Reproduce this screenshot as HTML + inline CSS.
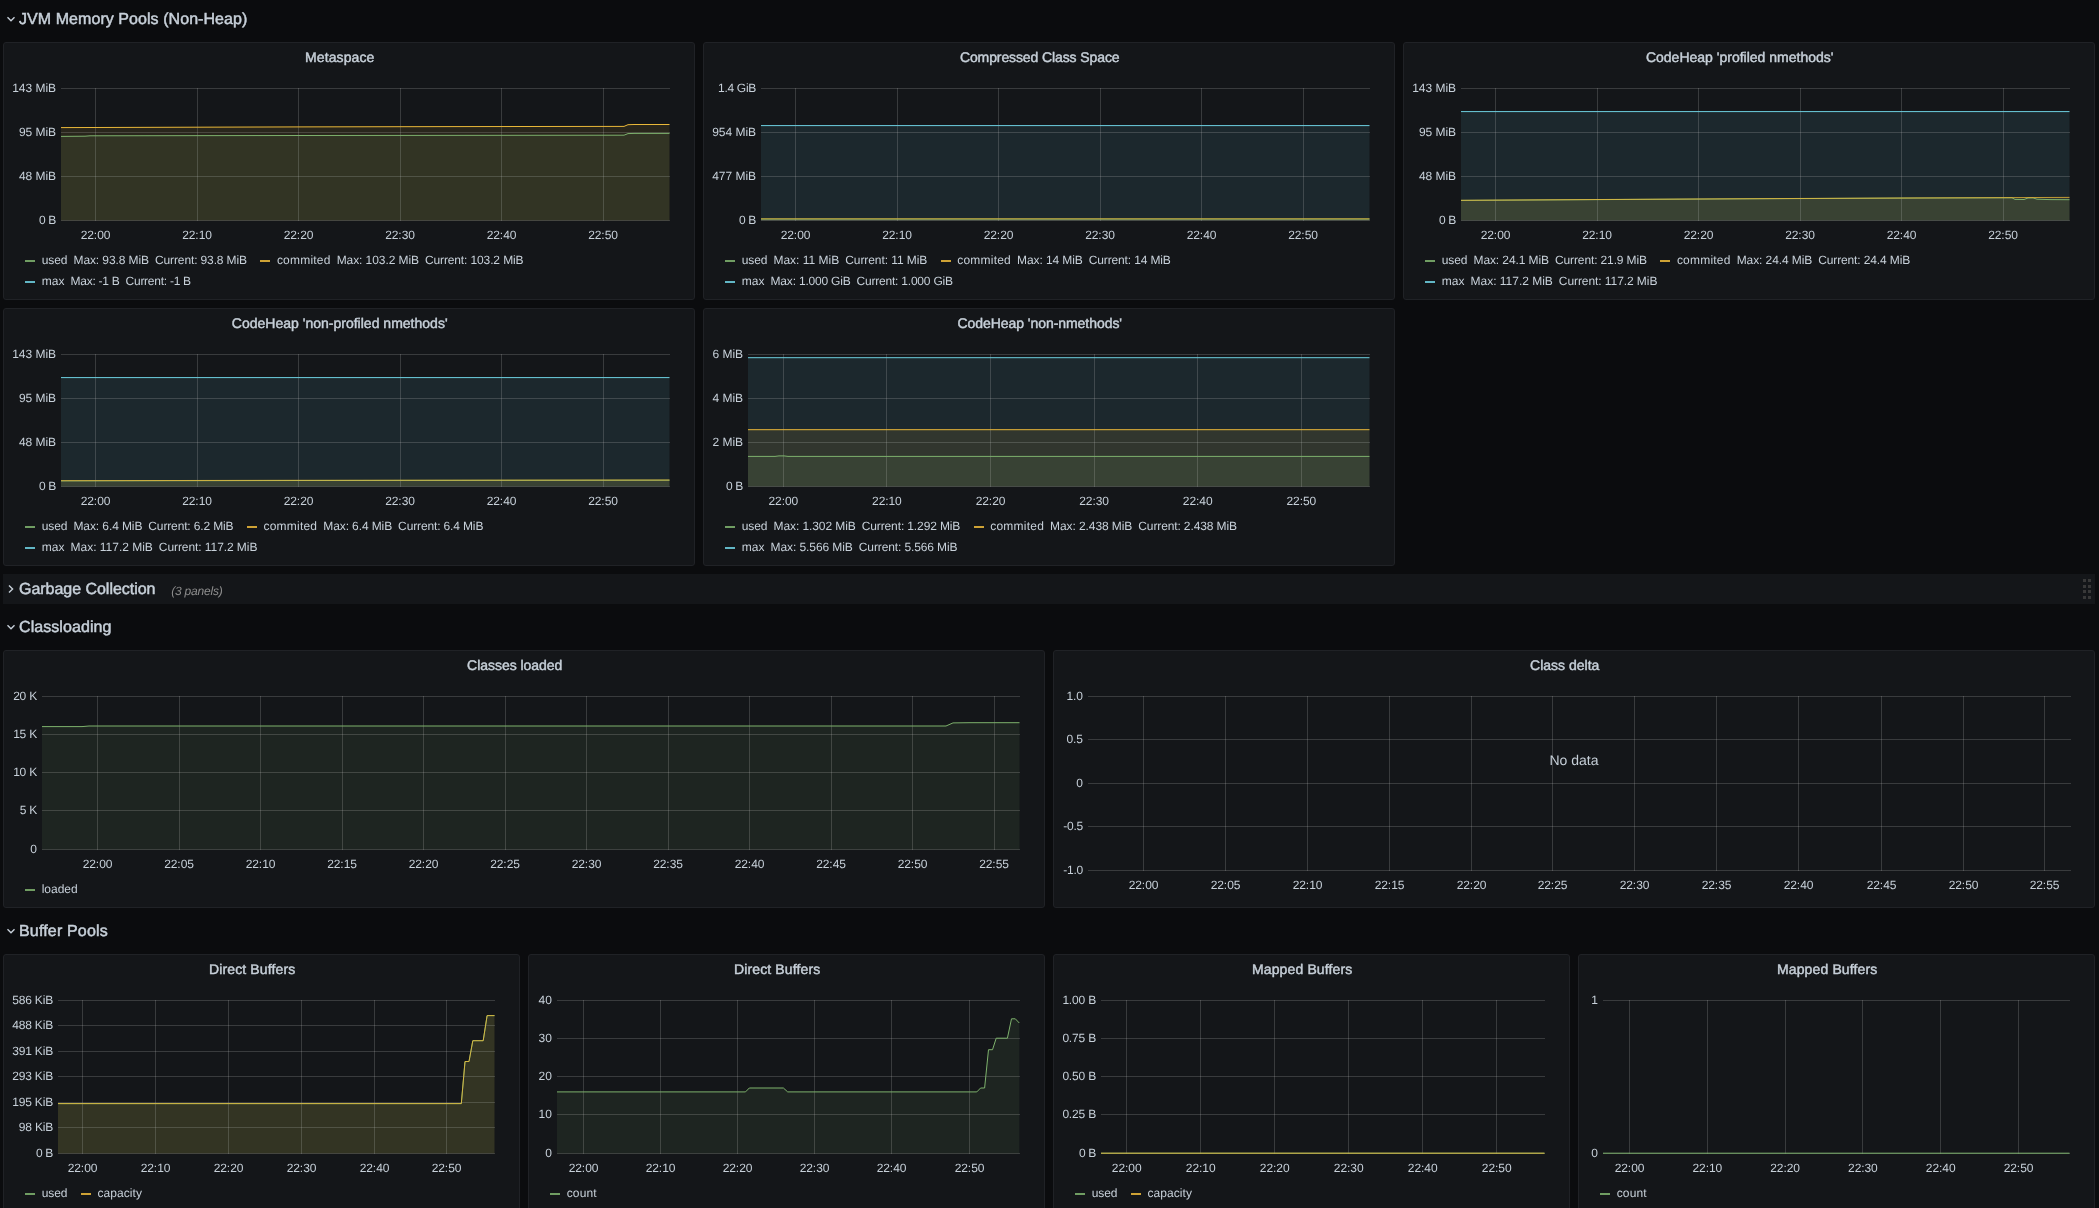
<!DOCTYPE html>
<html lang="en"><head><meta charset="utf-8"><title>JVM (Micrometer) - Grafana</title>
<style>
html,body{margin:0;padding:0}
body{width:2099px;height:1208px;overflow:hidden;background:#0b0c0e;color:#c7d0d9;font-family:"Liberation Sans",sans-serif;position:relative;text-rendering:geometricPrecision}
.t{position:absolute;white-space:pre;line-height:1em;font-size:12px}
.row{position:absolute;left:3px;width:2092px;height:30px}
.row.collapsed{background:#141619}
.row .t.rt{font-size:16px;-webkit-text-stroke:0.5px #c7d0d9}
.row .t.rx{font-style:italic;color:#8e8e8e}
.row svg{position:absolute;left:0;top:0}
.panel{position:absolute;box-sizing:border-box;background:#141619;border:1px solid #202226;border-radius:3px;overflow:hidden}
.panel>.in{position:absolute;left:-1px;top:-1px;will-change:transform}
.row>.in{position:absolute;left:0;top:0;width:100%;height:100%;will-change:transform}
.panel svg{position:absolute;left:0;top:0}
.t.pt{font-size:14px;-webkit-text-stroke:0.45px #c7d0d9}
.t.nd{font-size:14px}
.li{position:absolute;width:10px;height:2px;opacity:.87}
</style></head><body>

<div class="row" style="top:4px"><div class="in">
<svg width="30" height="30"><path d="M4.5 13.3 L8 16.7 L11.5 13.3" fill="none" stroke="#c7d0d9" stroke-width="1.4"/></svg>
<span class="t rt" style="left:16.00px;top:8px;letter-spacing:0.061px">JVM Memory Pools (Non-Heap)</span>
</div></div>
<div class="row collapsed" style="top:574px"><div class="in">
<svg width="2092" height="30"><path d="M6 11.6 L9.6 15.1 L6 18.6" fill="none" stroke="#c7d0d9" stroke-width="1.4"/>
<rect x="2080" y="5" width="3" height="3" fill="#383838"/>
<rect x="2080" y="11" width="3" height="3" fill="#383838"/>
<rect x="2080" y="16" width="3" height="3" fill="#383838"/>
<rect x="2080" y="22" width="3" height="3" fill="#383838"/>
<rect x="2085" y="5" width="3" height="3" fill="#383838"/>
<rect x="2085" y="11" width="3" height="3" fill="#383838"/>
<rect x="2085" y="16" width="3" height="3" fill="#383838"/>
<rect x="2085" y="22" width="3" height="3" fill="#383838"/>
</svg>
<span class="t rt" style="left:16.00px;top:8px;letter-spacing:-0.031px">Garbage Collection</span>
<span class="t rx" style="left:168.20px;top:11px;letter-spacing:-0.189px">(3 panels)</span>
</div></div>
<div class="row" style="top:612px"><div class="in">
<svg width="30" height="30"><path d="M4.5 13.3 L8 16.7 L11.5 13.3" fill="none" stroke="#c7d0d9" stroke-width="1.4"/></svg>
<span class="t rt" style="left:16.00px;top:8px;letter-spacing:0.072px">Classloading</span>
</div></div>
<div class="row" style="top:916px"><div class="in">
<svg width="30" height="30"><path d="M4.5 13.3 L8 16.7 L11.5 13.3" fill="none" stroke="#c7d0d9" stroke-width="1.4"/></svg>
<span class="t rt" style="left:16.00px;top:8px;letter-spacing:0.168px">Buffer Pools</span>
</div></div>
<div class="panel" style="left:3px;top:42px;width:692px;height:258px"><div class="in">
<svg width="692" height="258" viewBox="0 0 692 258"><path d="M58.0 85.6 L157.0 85.3 L297.0 84.9 L447.0 84.6 L621.0 84.4 L625.0 82.7 L631.0 82.5 L666.5 82.5 L666.5 178.5 L58.0 178.5 Z" fill="#eab839" fill-opacity="0.1" stroke="none"/><path d="M58.0 94.4 L82.0 94.2 L87.0 93.8 L297.0 93.5 L621.0 93.2 L625.0 91.6 L631.0 91.4 L666.5 91.4 L666.5 178.5 L58.0 178.5 Z" fill="#7eb26d" fill-opacity="0.1" stroke="none"/><rect x="92" y="46" width="1" height="133" fill="rgba(200,200,200,0.21)"/><rect x="194" y="46" width="1" height="133" fill="rgba(200,200,200,0.21)"/><rect x="295" y="46" width="1" height="133" fill="rgba(200,200,200,0.21)"/><rect x="397" y="46" width="1" height="133" fill="rgba(200,200,200,0.21)"/><rect x="498" y="46" width="1" height="133" fill="rgba(200,200,200,0.21)"/><rect x="600" y="46" width="1" height="133" fill="rgba(200,200,200,0.21)"/><rect x="58" y="46" width="609" height="1" fill="rgba(200,200,200,0.21)"/><rect x="58" y="90" width="609" height="1" fill="rgba(200,200,200,0.21)"/><rect x="58" y="134" width="609" height="1" fill="rgba(200,200,200,0.21)"/><rect x="58" y="178" width="609" height="1" fill="rgba(200,200,200,0.21)"/><path d="M58.0 85.6 L157.0 85.3 L297.0 84.9 L447.0 84.6 L621.0 84.4 L625.0 82.7 L631.0 82.5 L666.5 82.5" fill="none" stroke="#eab839" stroke-width="1" stroke-linejoin="round"/><path d="M58.0 94.4 L82.0 94.2 L87.0 93.8 L297.0 93.5 L621.0 93.2 L625.0 91.6 L631.0 91.4 L666.5 91.4" fill="none" stroke="#7eb26d" stroke-width="1" stroke-linejoin="round"/></svg>
<span class="t pt" style="left:302.00px;top:8px;letter-spacing:0.101px">Metaspace</span>
<span class="t " style="left:77.66px;top:187px;letter-spacing:-0.070px">22:00</span>
<span class="t " style="left:179.16px;top:187px;letter-spacing:-0.070px">22:10</span>
<span class="t " style="left:280.66px;top:187px;letter-spacing:-0.070px">22:20</span>
<span class="t " style="left:382.16px;top:187px;letter-spacing:-0.070px">22:30</span>
<span class="t " style="left:483.66px;top:187px;letter-spacing:-0.070px">22:40</span>
<span class="t " style="left:585.16px;top:187px;letter-spacing:-0.070px">22:50</span>
<span class="t " style="left:9.21px;top:40px;letter-spacing:-0.035px">143 MiB</span>
<span class="t " style="left:15.92px;top:84px;letter-spacing:-0.046px">95 MiB</span>
<span class="t " style="left:15.92px;top:128px;letter-spacing:-0.046px">48 MiB</span>
<span class="t " style="left:35.92px;top:172px;letter-spacing:-0.311px">0 B</span>
<i class="li" style="left:22.0px;top:218.0px;background:#7eb26d"></i>
<span class="t " style="left:38.70px;top:212px;letter-spacing:-0.065px">used</span>
<span class="t " style="left:70.47px;top:212px;letter-spacing:-0.088px">Max: 93.8 MiB</span>
<span class="t " style="left:152.03px;top:212px;letter-spacing:-0.129px">Current: 93.8 MiB</span>
<i class="li" style="left:257.2px;top:218.0px;background:#eab839"></i>
<span class="t " style="left:273.89px;top:212px;letter-spacing:0.220px">commited</span>
<span class="t " style="left:333.66px;top:212px;letter-spacing:-0.080px">Max: 103.2 MiB</span>
<span class="t " style="left:421.91px;top:212px;letter-spacing:-0.121px">Current: 103.2 MiB</span>
<i class="li" style="left:22.0px;top:239.0px;background:#6ed0e0"></i>
<span class="t " style="left:38.70px;top:233px;letter-spacing:0.061px">max</span>
<span class="t " style="left:67.55px;top:233px;letter-spacing:-0.261px">Max: -1 B</span>
<span class="t " style="left:122.57px;top:233px;letter-spacing:-0.261px">Current: -1 B</span>
</div></div>
<div class="panel" style="left:703px;top:42px;width:692px;height:258px"><div class="in">
<svg width="692" height="258" viewBox="0 0 692 258"><path d="M58.0 83.6 L666.5 83.6 L666.5 178.5 L58.0 178.5 Z" fill="#6ed0e0" fill-opacity="0.1" stroke="none"/><path d="M58.0 177.1 L666.5 177.1 L666.5 178.5 L58.0 178.5 Z" fill="#7eb26d" fill-opacity="0.1" stroke="none"/><path d="M58.0 176.8 L666.5 176.8 L666.5 178.5 L58.0 178.5 Z" fill="#eab839" fill-opacity="0.1" stroke="none"/><rect x="92" y="46" width="1" height="133" fill="rgba(200,200,200,0.21)"/><rect x="194" y="46" width="1" height="133" fill="rgba(200,200,200,0.21)"/><rect x="295" y="46" width="1" height="133" fill="rgba(200,200,200,0.21)"/><rect x="397" y="46" width="1" height="133" fill="rgba(200,200,200,0.21)"/><rect x="498" y="46" width="1" height="133" fill="rgba(200,200,200,0.21)"/><rect x="600" y="46" width="1" height="133" fill="rgba(200,200,200,0.21)"/><rect x="58" y="46" width="609" height="1" fill="rgba(200,200,200,0.21)"/><rect x="58" y="90" width="609" height="1" fill="rgba(200,200,200,0.21)"/><rect x="58" y="134" width="609" height="1" fill="rgba(200,200,200,0.21)"/><rect x="58" y="178" width="609" height="1" fill="rgba(200,200,200,0.21)"/><path d="M58.0 83.6 L666.5 83.6" fill="none" stroke="#6ed0e0" stroke-width="1" stroke-linejoin="round"/><path d="M58.0 177.1 L666.5 177.1" fill="none" stroke="#7eb26d" stroke-width="1" stroke-linejoin="round"/><path d="M58.0 176.8 L666.5 176.8" fill="none" stroke="#eab839" stroke-width="1" stroke-opacity="0.78" stroke-linejoin="round"/></svg>
<span class="t pt" style="left:256.90px;top:8px;letter-spacing:-0.103px">Compressed Class Space</span>
<span class="t " style="left:77.66px;top:187px;letter-spacing:-0.070px">22:00</span>
<span class="t " style="left:179.16px;top:187px;letter-spacing:-0.070px">22:10</span>
<span class="t " style="left:280.66px;top:187px;letter-spacing:-0.070px">22:20</span>
<span class="t " style="left:382.16px;top:187px;letter-spacing:-0.070px">22:30</span>
<span class="t " style="left:483.66px;top:187px;letter-spacing:-0.070px">22:40</span>
<span class="t " style="left:585.16px;top:187px;letter-spacing:-0.070px">22:50</span>
<span class="t " style="left:15.06px;top:40px;letter-spacing:-0.299px">1.4 GiB</span>
<span class="t " style="left:9.21px;top:84px;letter-spacing:-0.035px">954 MiB</span>
<span class="t " style="left:9.21px;top:128px;letter-spacing:-0.035px">477 MiB</span>
<span class="t " style="left:35.92px;top:172px;letter-spacing:-0.311px">0 B</span>
<i class="li" style="left:22.0px;top:218.0px;background:#7eb26d"></i>
<span class="t " style="left:38.70px;top:212px;letter-spacing:-0.065px">used</span>
<span class="t " style="left:70.47px;top:212px;letter-spacing:-0.007px">Max: 11 MiB</span>
<span class="t " style="left:142.20px;top:212px;letter-spacing:-0.075px">Current: 11 MiB</span>
<i class="li" style="left:237.5px;top:218.0px;background:#eab839"></i>
<span class="t " style="left:254.21px;top:212px;letter-spacing:0.220px">commited</span>
<span class="t " style="left:313.99px;top:212px;letter-spacing:-0.088px">Max: 14 MiB</span>
<span class="t " style="left:385.71px;top:212px;letter-spacing:-0.134px">Current: 14 MiB</span>
<i class="li" style="left:22.0px;top:239.0px;background:#6ed0e0"></i>
<span class="t " style="left:38.70px;top:233px;letter-spacing:0.061px">max</span>
<span class="t " style="left:67.55px;top:233px;letter-spacing:-0.197px">Max: 1.000 GiB</span>
<span class="t " style="left:153.52px;top:233px;letter-spacing:-0.211px">Current: 1.000 GiB</span>
</div></div>
<div class="panel" style="left:1403px;top:42px;width:692px;height:258px"><div class="in">
<svg width="692" height="258" viewBox="0 0 692 258"><path d="M58.0 69.6 L666.5 69.6 L666.5 178.5 L58.0 178.5 Z" fill="#6ed0e0" fill-opacity="0.1" stroke="none"/><path d="M58.0 158.4 L197.0 157.6 L347.0 156.8 L497.0 156.1 L609.0 155.8 L612.0 157.4 L621.0 157.5 L625.0 156.0 L630.0 155.9 L634.0 157.2 L647.0 157.6 L666.5 157.7 L666.5 178.5 L58.0 178.5 Z" fill="#7eb26d" fill-opacity="0.1" stroke="none"/><path d="M58.0 158.3 L197.0 157.5 L347.0 156.7 L497.0 156.0 L609.0 155.6 L666.5 155.4 L666.5 178.5 L58.0 178.5 Z" fill="#eab839" fill-opacity="0.1" stroke="none"/><rect x="92" y="46" width="1" height="133" fill="rgba(200,200,200,0.21)"/><rect x="194" y="46" width="1" height="133" fill="rgba(200,200,200,0.21)"/><rect x="295" y="46" width="1" height="133" fill="rgba(200,200,200,0.21)"/><rect x="397" y="46" width="1" height="133" fill="rgba(200,200,200,0.21)"/><rect x="498" y="46" width="1" height="133" fill="rgba(200,200,200,0.21)"/><rect x="600" y="46" width="1" height="133" fill="rgba(200,200,200,0.21)"/><rect x="58" y="46" width="609" height="1" fill="rgba(200,200,200,0.21)"/><rect x="58" y="90" width="609" height="1" fill="rgba(200,200,200,0.21)"/><rect x="58" y="134" width="609" height="1" fill="rgba(200,200,200,0.21)"/><rect x="58" y="178" width="609" height="1" fill="rgba(200,200,200,0.21)"/><path d="M58.0 69.6 L666.5 69.6" fill="none" stroke="#6ed0e0" stroke-width="1" stroke-linejoin="round"/><path d="M58.0 158.4 L197.0 157.6 L347.0 156.8 L497.0 156.1 L609.0 155.8 L612.0 157.4 L621.0 157.5 L625.0 156.0 L630.0 155.9 L634.0 157.2 L647.0 157.6 L666.5 157.7" fill="none" stroke="#7eb26d" stroke-width="1" stroke-linejoin="round"/><path d="M58.0 158.3 L197.0 157.5 L347.0 156.7 L497.0 156.0 L609.0 155.6 L666.5 155.4" fill="none" stroke="#eab839" stroke-width="1" stroke-opacity="0.78" stroke-linejoin="round"/></svg>
<span class="t pt" style="left:242.93px;top:8px;letter-spacing:0.002px">CodeHeap &#x27;profiled nmethods&#x27;</span>
<span class="t " style="left:77.66px;top:187px;letter-spacing:-0.070px">22:00</span>
<span class="t " style="left:179.16px;top:187px;letter-spacing:-0.070px">22:10</span>
<span class="t " style="left:280.66px;top:187px;letter-spacing:-0.070px">22:20</span>
<span class="t " style="left:382.16px;top:187px;letter-spacing:-0.070px">22:30</span>
<span class="t " style="left:483.66px;top:187px;letter-spacing:-0.070px">22:40</span>
<span class="t " style="left:585.16px;top:187px;letter-spacing:-0.070px">22:50</span>
<span class="t " style="left:9.21px;top:40px;letter-spacing:-0.035px">143 MiB</span>
<span class="t " style="left:15.92px;top:84px;letter-spacing:-0.046px">95 MiB</span>
<span class="t " style="left:15.92px;top:128px;letter-spacing:-0.046px">48 MiB</span>
<span class="t " style="left:35.92px;top:172px;letter-spacing:-0.311px">0 B</span>
<i class="li" style="left:22.0px;top:218.0px;background:#7eb26d"></i>
<span class="t " style="left:38.70px;top:212px;letter-spacing:-0.065px">used</span>
<span class="t " style="left:70.47px;top:212px;letter-spacing:-0.088px">Max: 24.1 MiB</span>
<span class="t " style="left:152.03px;top:212px;letter-spacing:-0.129px">Current: 21.9 MiB</span>
<i class="li" style="left:257.2px;top:218.0px;background:#eab839"></i>
<span class="t " style="left:273.89px;top:212px;letter-spacing:0.220px">commited</span>
<span class="t " style="left:333.66px;top:212px;letter-spacing:-0.088px">Max: 24.4 MiB</span>
<span class="t " style="left:415.22px;top:212px;letter-spacing:-0.129px">Current: 24.4 MiB</span>
<i class="li" style="left:22.0px;top:239.0px;background:#6ed0e0"></i>
<span class="t " style="left:38.70px;top:233px;letter-spacing:0.061px">max</span>
<span class="t " style="left:67.55px;top:233px;letter-spacing:-0.017px">Max: 117.2 MiB</span>
<span class="t " style="left:155.80px;top:233px;letter-spacing:-0.072px">Current: 117.2 MiB</span>
</div></div>
<div class="panel" style="left:3px;top:308px;width:692px;height:258px"><div class="in">
<svg width="692" height="258" viewBox="0 0 692 258"><path d="M58.0 69.6 L666.5 69.6 L666.5 178.5 L58.0 178.5 Z" fill="#6ed0e0" fill-opacity="0.1" stroke="none"/><path d="M58.0 172.9 L297.0 172.5 L666.5 172.2 L666.5 178.5 L58.0 178.5 Z" fill="#7eb26d" fill-opacity="0.1" stroke="none"/><path d="M58.0 172.7 L297.0 172.3 L666.5 172.0 L666.5 178.5 L58.0 178.5 Z" fill="#eab839" fill-opacity="0.1" stroke="none"/><rect x="92" y="46" width="1" height="133" fill="rgba(200,200,200,0.21)"/><rect x="194" y="46" width="1" height="133" fill="rgba(200,200,200,0.21)"/><rect x="295" y="46" width="1" height="133" fill="rgba(200,200,200,0.21)"/><rect x="397" y="46" width="1" height="133" fill="rgba(200,200,200,0.21)"/><rect x="498" y="46" width="1" height="133" fill="rgba(200,200,200,0.21)"/><rect x="600" y="46" width="1" height="133" fill="rgba(200,200,200,0.21)"/><rect x="58" y="46" width="609" height="1" fill="rgba(200,200,200,0.21)"/><rect x="58" y="90" width="609" height="1" fill="rgba(200,200,200,0.21)"/><rect x="58" y="134" width="609" height="1" fill="rgba(200,200,200,0.21)"/><rect x="58" y="178" width="609" height="1" fill="rgba(200,200,200,0.21)"/><path d="M58.0 69.6 L666.5 69.6" fill="none" stroke="#6ed0e0" stroke-width="1" stroke-linejoin="round"/><path d="M58.0 172.9 L297.0 172.5 L666.5 172.2" fill="none" stroke="#7eb26d" stroke-width="1" stroke-linejoin="round"/><path d="M58.0 172.7 L297.0 172.3 L666.5 172.0" fill="none" stroke="#eab839" stroke-width="1" stroke-opacity="0.78" stroke-linejoin="round"/></svg>
<span class="t pt" style="left:228.79px;top:8px;letter-spacing:0.010px">CodeHeap &#x27;non-profiled nmethods&#x27;</span>
<span class="t " style="left:77.66px;top:187px;letter-spacing:-0.070px">22:00</span>
<span class="t " style="left:179.16px;top:187px;letter-spacing:-0.070px">22:10</span>
<span class="t " style="left:280.66px;top:187px;letter-spacing:-0.070px">22:20</span>
<span class="t " style="left:382.16px;top:187px;letter-spacing:-0.070px">22:30</span>
<span class="t " style="left:483.66px;top:187px;letter-spacing:-0.070px">22:40</span>
<span class="t " style="left:585.16px;top:187px;letter-spacing:-0.070px">22:50</span>
<span class="t " style="left:9.21px;top:40px;letter-spacing:-0.035px">143 MiB</span>
<span class="t " style="left:15.92px;top:84px;letter-spacing:-0.046px">95 MiB</span>
<span class="t " style="left:15.92px;top:128px;letter-spacing:-0.046px">48 MiB</span>
<span class="t " style="left:35.92px;top:172px;letter-spacing:-0.311px">0 B</span>
<i class="li" style="left:22.0px;top:218.0px;background:#7eb26d"></i>
<span class="t " style="left:38.70px;top:212px;letter-spacing:-0.065px">used</span>
<span class="t " style="left:70.47px;top:212px;letter-spacing:-0.098px">Max: 6.4 MiB</span>
<span class="t " style="left:145.33px;top:212px;letter-spacing:-0.139px">Current: 6.2 MiB</span>
<i class="li" style="left:243.8px;top:218.0px;background:#eab839"></i>
<span class="t " style="left:260.48px;top:212px;letter-spacing:0.220px">commited</span>
<span class="t " style="left:320.26px;top:212px;letter-spacing:-0.098px">Max: 6.4 MiB</span>
<span class="t " style="left:395.12px;top:212px;letter-spacing:-0.139px">Current: 6.4 MiB</span>
<i class="li" style="left:22.0px;top:239.0px;background:#6ed0e0"></i>
<span class="t " style="left:38.70px;top:233px;letter-spacing:0.061px">max</span>
<span class="t " style="left:67.55px;top:233px;letter-spacing:-0.017px">Max: 117.2 MiB</span>
<span class="t " style="left:155.80px;top:233px;letter-spacing:-0.072px">Current: 117.2 MiB</span>
</div></div>
<div class="panel" style="left:703px;top:308px;width:692px;height:258px"><div class="in">
<svg width="692" height="258" viewBox="0 0 692 258"><path d="M45.0 49.7 L666.5 49.7 L666.5 178.5 L45.0 178.5 Z" fill="#6ed0e0" fill-opacity="0.1" stroke="none"/><path d="M45.0 121.7 L666.5 121.7 L666.5 178.5 L45.0 178.5 Z" fill="#eab839" fill-opacity="0.1" stroke="none"/><path d="M45.0 148.4 L72.0 148.4 L76.0 147.9 L81.0 147.9 L85.0 148.4 L666.5 148.4 L666.5 178.5 L45.0 178.5 Z" fill="#7eb26d" fill-opacity="0.1" stroke="none"/><rect x="80" y="46" width="1" height="133" fill="rgba(200,200,200,0.21)"/><rect x="183" y="46" width="1" height="133" fill="rgba(200,200,200,0.21)"/><rect x="287" y="46" width="1" height="133" fill="rgba(200,200,200,0.21)"/><rect x="391" y="46" width="1" height="133" fill="rgba(200,200,200,0.21)"/><rect x="494" y="46" width="1" height="133" fill="rgba(200,200,200,0.21)"/><rect x="598" y="46" width="1" height="133" fill="rgba(200,200,200,0.21)"/><rect x="45" y="46" width="622" height="1" fill="rgba(200,200,200,0.21)"/><rect x="45" y="90" width="622" height="1" fill="rgba(200,200,200,0.21)"/><rect x="45" y="134" width="622" height="1" fill="rgba(200,200,200,0.21)"/><rect x="45" y="178" width="622" height="1" fill="rgba(200,200,200,0.21)"/><path d="M45.0 49.7 L666.5 49.7" fill="none" stroke="#6ed0e0" stroke-width="1" stroke-linejoin="round"/><path d="M45.0 121.7 L666.5 121.7" fill="none" stroke="#eab839" stroke-width="1" stroke-linejoin="round"/><path d="M45.0 148.4 L72.0 148.4 L76.0 147.9 L81.0 147.9 L85.0 148.4 L666.5 148.4" fill="none" stroke="#7eb26d" stroke-width="1" stroke-linejoin="round"/></svg>
<span class="t pt" style="left:254.40px;top:8px;letter-spacing:-0.047px">CodeHeap &#x27;non-nmethods&#x27;</span>
<span class="t " style="left:65.46px;top:187px;letter-spacing:-0.070px">22:00</span>
<span class="t " style="left:169.06px;top:187px;letter-spacing:-0.070px">22:10</span>
<span class="t " style="left:272.66px;top:187px;letter-spacing:-0.070px">22:20</span>
<span class="t " style="left:376.26px;top:187px;letter-spacing:-0.070px">22:30</span>
<span class="t " style="left:479.86px;top:187px;letter-spacing:-0.070px">22:40</span>
<span class="t " style="left:583.46px;top:187px;letter-spacing:-0.070px">22:50</span>
<span class="t " style="left:9.62px;top:40px;letter-spacing:-0.062px">6 MiB</span>
<span class="t " style="left:9.62px;top:84px;letter-spacing:-0.062px">4 MiB</span>
<span class="t " style="left:9.62px;top:128px;letter-spacing:-0.062px">2 MiB</span>
<span class="t " style="left:22.92px;top:172px;letter-spacing:-0.311px">0 B</span>
<i class="li" style="left:22.0px;top:218.0px;background:#7eb26d"></i>
<span class="t " style="left:38.70px;top:212px;letter-spacing:-0.065px">used</span>
<span class="t " style="left:70.47px;top:212px;letter-spacing:-0.080px">Max: 1.302 MiB</span>
<span class="t " style="left:158.72px;top:212px;letter-spacing:-0.121px">Current: 1.292 MiB</span>
<i class="li" style="left:270.6px;top:218.0px;background:#eab839"></i>
<span class="t " style="left:287.26px;top:212px;letter-spacing:0.220px">commited</span>
<span class="t " style="left:347.04px;top:212px;letter-spacing:-0.080px">Max: 2.438 MiB</span>
<span class="t " style="left:435.29px;top:212px;letter-spacing:-0.121px">Current: 2.438 MiB</span>
<i class="li" style="left:22.0px;top:239.0px;background:#6ed0e0"></i>
<span class="t " style="left:38.70px;top:233px;letter-spacing:0.061px">max</span>
<span class="t " style="left:67.55px;top:233px;letter-spacing:-0.080px">Max: 5.566 MiB</span>
<span class="t " style="left:155.80px;top:233px;letter-spacing:-0.121px">Current: 5.566 MiB</span>
</div></div>
<div class="panel" style="left:3px;top:650px;width:1042px;height:258px"><div class="in">
<svg width="1042" height="258" viewBox="0 0 1042 258"><path d="M39.0 76.6 L79.0 76.6 L86.0 76.0 L943.0 76.0 L950.0 72.9 L967.0 72.7 L1016.5 72.7 L1016.5 199.5 L39.0 199.5 Z" fill="#7eb26d" fill-opacity="0.1" stroke="none"/><rect x="94" y="46" width="1" height="154" fill="rgba(200,200,200,0.21)"/><rect x="176" y="46" width="1" height="154" fill="rgba(200,200,200,0.21)"/><rect x="257" y="46" width="1" height="154" fill="rgba(200,200,200,0.21)"/><rect x="339" y="46" width="1" height="154" fill="rgba(200,200,200,0.21)"/><rect x="420" y="46" width="1" height="154" fill="rgba(200,200,200,0.21)"/><rect x="502" y="46" width="1" height="154" fill="rgba(200,200,200,0.21)"/><rect x="583" y="46" width="1" height="154" fill="rgba(200,200,200,0.21)"/><rect x="665" y="46" width="1" height="154" fill="rgba(200,200,200,0.21)"/><rect x="746" y="46" width="1" height="154" fill="rgba(200,200,200,0.21)"/><rect x="828" y="46" width="1" height="154" fill="rgba(200,200,200,0.21)"/><rect x="909" y="46" width="1" height="154" fill="rgba(200,200,200,0.21)"/><rect x="991" y="46" width="1" height="154" fill="rgba(200,200,200,0.21)"/><rect x="39" y="46" width="978" height="1" fill="rgba(200,200,200,0.21)"/><rect x="39" y="84" width="978" height="1" fill="rgba(200,200,200,0.21)"/><rect x="39" y="122" width="978" height="1" fill="rgba(200,200,200,0.21)"/><rect x="39" y="160" width="978" height="1" fill="rgba(200,200,200,0.21)"/><rect x="39" y="199" width="978" height="1" fill="rgba(200,200,200,0.21)"/><path d="M39.0 76.6 L79.0 76.6 L86.0 76.0 L943.0 76.0 L950.0 72.9 L967.0 72.7 L1016.5 72.7" fill="none" stroke="#7eb26d" stroke-width="1" stroke-linejoin="round"/></svg>
<span class="t pt" style="left:464.11px;top:8px;letter-spacing:-0.039px">Classes loaded</span>
<span class="t " style="left:79.66px;top:208px;letter-spacing:-0.070px">22:00</span>
<span class="t " style="left:161.16px;top:208px;letter-spacing:-0.070px">22:05</span>
<span class="t " style="left:242.66px;top:208px;letter-spacing:-0.070px">22:10</span>
<span class="t " style="left:324.16px;top:208px;letter-spacing:-0.070px">22:15</span>
<span class="t " style="left:405.66px;top:208px;letter-spacing:-0.070px">22:20</span>
<span class="t " style="left:487.16px;top:208px;letter-spacing:-0.070px">22:25</span>
<span class="t " style="left:568.66px;top:208px;letter-spacing:-0.070px">22:30</span>
<span class="t " style="left:650.16px;top:208px;letter-spacing:-0.070px">22:35</span>
<span class="t " style="left:731.66px;top:208px;letter-spacing:-0.070px">22:40</span>
<span class="t " style="left:813.16px;top:208px;letter-spacing:-0.070px">22:45</span>
<span class="t " style="left:894.66px;top:208px;letter-spacing:-0.070px">22:50</span>
<span class="t " style="left:976.16px;top:208px;letter-spacing:-0.070px">22:55</span>
<span class="t " style="left:10.17px;top:40px;letter-spacing:-0.214px">20 K</span>
<span class="t " style="left:10.17px;top:78px;letter-spacing:-0.214px">15 K</span>
<span class="t " style="left:10.17px;top:116px;letter-spacing:-0.214px">10 K</span>
<span class="t " style="left:16.87px;top:154px;letter-spacing:-0.295px">5 K</span>
<span class="t " style="left:27.30px;top:193px;letter-spacing:0.015px">0</span>
<i class="li" style="left:22.0px;top:239.0px;background:#7eb26d"></i>
<span class="t " style="left:38.70px;top:233px;letter-spacing:-0.019px">loaded</span>
</div></div>
<div class="panel" style="left:1053px;top:650px;width:1042px;height:258px"><div class="in">
<svg width="1042" height="258" viewBox="0 0 1042 258"><rect x="90" y="46" width="1" height="175" fill="rgba(200,200,200,0.21)"/><rect x="172" y="46" width="1" height="175" fill="rgba(200,200,200,0.21)"/><rect x="254" y="46" width="1" height="175" fill="rgba(200,200,200,0.21)"/><rect x="336" y="46" width="1" height="175" fill="rgba(200,200,200,0.21)"/><rect x="418" y="46" width="1" height="175" fill="rgba(200,200,200,0.21)"/><rect x="499" y="46" width="1" height="175" fill="rgba(200,200,200,0.21)"/><rect x="581" y="46" width="1" height="175" fill="rgba(200,200,200,0.21)"/><rect x="663" y="46" width="1" height="175" fill="rgba(200,200,200,0.21)"/><rect x="745" y="46" width="1" height="175" fill="rgba(200,200,200,0.21)"/><rect x="828" y="46" width="1" height="175" fill="rgba(200,200,200,0.21)"/><rect x="910" y="46" width="1" height="175" fill="rgba(200,200,200,0.21)"/><rect x="991" y="46" width="1" height="175" fill="rgba(200,200,200,0.21)"/><rect x="35" y="46" width="983" height="1" fill="rgba(200,200,200,0.21)"/><rect x="35" y="89" width="983" height="1" fill="rgba(200,200,200,0.21)"/><rect x="35" y="133" width="983" height="1" fill="rgba(200,200,200,0.21)"/><rect x="35" y="176" width="983" height="1" fill="rgba(200,200,200,0.21)"/><rect x="35" y="220" width="983" height="1" fill="rgba(200,200,200,0.21)"/></svg>
<span class="t pt" style="left:477.04px;top:8px;letter-spacing:0.004px">Class delta</span>
<span class="t " style="left:75.66px;top:229px;letter-spacing:-0.070px">22:00</span>
<span class="t " style="left:157.66px;top:229px;letter-spacing:-0.070px">22:05</span>
<span class="t " style="left:239.66px;top:229px;letter-spacing:-0.070px">22:10</span>
<span class="t " style="left:321.66px;top:229px;letter-spacing:-0.070px">22:15</span>
<span class="t " style="left:403.66px;top:229px;letter-spacing:-0.070px">22:20</span>
<span class="t " style="left:484.66px;top:229px;letter-spacing:-0.070px">22:25</span>
<span class="t " style="left:566.66px;top:229px;letter-spacing:-0.070px">22:30</span>
<span class="t " style="left:648.66px;top:229px;letter-spacing:-0.070px">22:35</span>
<span class="t " style="left:730.66px;top:229px;letter-spacing:-0.070px">22:40</span>
<span class="t " style="left:813.66px;top:229px;letter-spacing:-0.070px">22:45</span>
<span class="t " style="left:895.66px;top:229px;letter-spacing:-0.070px">22:50</span>
<span class="t " style="left:976.66px;top:229px;letter-spacing:-0.070px">22:55</span>
<span class="t " style="left:13.46px;top:40px;letter-spacing:-0.049px">1.0</span>
<span class="t " style="left:13.46px;top:83px;letter-spacing:-0.049px">0.5</span>
<span class="t " style="left:23.30px;top:127px;letter-spacing:0.015px">0</span>
<span class="t " style="left:10.17px;top:170px;letter-spacing:-0.215px">-0.5</span>
<span class="t " style="left:10.17px;top:214px;letter-spacing:-0.215px">-1.0</span>
<span class="t nd" style="left:496.42px;top:103px;letter-spacing:0.016px">No data</span>
</div></div>
<div class="panel" style="left:3px;top:954px;width:517px;height:258px"><div class="in">
<svg width="517" height="258" viewBox="0 0 517 258"><path d="M55.0 149.6 L458.3 149.6 L462.0 107.5 L466.0 107.5 L469.8 86.7 L480.2 86.7 L484.1 61.6 L491.5 61.6 L491.5 199.5 L55.0 199.5 Z" fill="#7eb26d" fill-opacity="0.1" stroke="none"/><path d="M55.0 149.6 L458.3 149.6 L462.0 107.5 L466.0 107.5 L469.8 86.7 L480.2 86.7 L484.1 61.6 L491.5 61.6 L491.5 199.5 L55.0 199.5 Z" fill="#eab839" fill-opacity="0.1" stroke="none"/><rect x="79" y="46" width="1" height="154" fill="rgba(200,200,200,0.21)"/><rect x="152" y="46" width="1" height="154" fill="rgba(200,200,200,0.21)"/><rect x="225" y="46" width="1" height="154" fill="rgba(200,200,200,0.21)"/><rect x="298" y="46" width="1" height="154" fill="rgba(200,200,200,0.21)"/><rect x="371" y="46" width="1" height="154" fill="rgba(200,200,200,0.21)"/><rect x="443" y="46" width="1" height="154" fill="rgba(200,200,200,0.21)"/><rect x="55" y="46" width="437" height="1" fill="rgba(200,200,200,0.21)"/><rect x="55" y="71" width="437" height="1" fill="rgba(200,200,200,0.21)"/><rect x="55" y="97" width="437" height="1" fill="rgba(200,200,200,0.21)"/><rect x="55" y="122" width="437" height="1" fill="rgba(200,200,200,0.21)"/><rect x="55" y="148" width="437" height="1" fill="rgba(200,200,200,0.21)"/><rect x="55" y="173" width="437" height="1" fill="rgba(200,200,200,0.21)"/><rect x="55" y="199" width="437" height="1" fill="rgba(200,200,200,0.21)"/><path d="M55.0 149.6 L458.3 149.6 L462.0 107.5 L466.0 107.5 L469.8 86.7 L480.2 86.7 L484.1 61.6 L491.5 61.6" fill="none" stroke="#7eb26d" stroke-width="1" stroke-linejoin="round"/><path d="M55.0 149.6 L458.3 149.6 L462.0 107.5 L466.0 107.5 L469.8 86.7 L480.2 86.7 L484.1 61.6 L491.5 61.6" fill="none" stroke="#eab839" stroke-width="1" stroke-opacity="0.78" stroke-linejoin="round"/></svg>
<span class="t pt" style="left:205.96px;top:8px;letter-spacing:0.138px">Direct Buffers</span>
<span class="t " style="left:64.66px;top:208px;letter-spacing:-0.070px">22:00</span>
<span class="t " style="left:137.66px;top:208px;letter-spacing:-0.070px">22:10</span>
<span class="t " style="left:210.66px;top:208px;letter-spacing:-0.070px">22:20</span>
<span class="t " style="left:283.66px;top:208px;letter-spacing:-0.070px">22:30</span>
<span class="t " style="left:356.66px;top:208px;letter-spacing:-0.070px">22:40</span>
<span class="t " style="left:428.66px;top:208px;letter-spacing:-0.070px">22:50</span>
<span class="t " style="left:9.15px;top:40px;letter-spacing:-0.168px">586 KiB</span>
<span class="t " style="left:9.15px;top:65px;letter-spacing:-0.168px">488 KiB</span>
<span class="t " style="left:9.15px;top:91px;letter-spacing:-0.168px">391 KiB</span>
<span class="t " style="left:9.15px;top:116px;letter-spacing:-0.168px">293 KiB</span>
<span class="t " style="left:9.15px;top:142px;letter-spacing:-0.168px">195 KiB</span>
<span class="t " style="left:15.85px;top:167px;letter-spacing:-0.202px">98 KiB</span>
<span class="t " style="left:32.92px;top:193px;letter-spacing:-0.311px">0 B</span>
<i class="li" style="left:22.0px;top:239.0px;background:#7eb26d"></i>
<span class="t " style="left:38.70px;top:233px;letter-spacing:-0.065px">used</span>
<i class="li" style="left:77.8px;top:239.0px;background:#eab839"></i>
<span class="t " style="left:94.47px;top:233px;letter-spacing:0.068px">capacity</span>
</div></div>
<div class="panel" style="left:528px;top:954px;width:517px;height:258px"><div class="in">
<svg width="517" height="258" viewBox="0 0 517 258"><path d="M29.0 137.9 L217.5 137.9 L221.3 134.0 L255.4 134.0 L259.7 137.9 L448.8 137.9 L452.6 134.0 L456.6 134.0 L460.5 95.7 L464.5 95.7 L468.2 84.2 L479.4 84.2 L483.5 64.8 L487.3 64.8 L491.3 69.0 L491.3 199.5 L29.0 199.5 Z" fill="#7eb26d" fill-opacity="0.1" stroke="none"/><rect x="55" y="46" width="1" height="154" fill="rgba(200,200,200,0.21)"/><rect x="132" y="46" width="1" height="154" fill="rgba(200,200,200,0.21)"/><rect x="209" y="46" width="1" height="154" fill="rgba(200,200,200,0.21)"/><rect x="286" y="46" width="1" height="154" fill="rgba(200,200,200,0.21)"/><rect x="363" y="46" width="1" height="154" fill="rgba(200,200,200,0.21)"/><rect x="441" y="46" width="1" height="154" fill="rgba(200,200,200,0.21)"/><rect x="29" y="46" width="463" height="1" fill="rgba(200,200,200,0.21)"/><rect x="29" y="84" width="463" height="1" fill="rgba(200,200,200,0.21)"/><rect x="29" y="122" width="463" height="1" fill="rgba(200,200,200,0.21)"/><rect x="29" y="160" width="463" height="1" fill="rgba(200,200,200,0.21)"/><rect x="29" y="199" width="463" height="1" fill="rgba(200,200,200,0.21)"/><path d="M29.0 137.9 L217.5 137.9 L221.3 134.0 L255.4 134.0 L259.7 137.9 L448.8 137.9 L452.6 134.0 L456.6 134.0 L460.5 95.7 L464.5 95.7 L468.2 84.2 L479.4 84.2 L483.5 64.8 L487.3 64.8 L491.3 69.0" fill="none" stroke="#7eb26d" stroke-width="1" stroke-linejoin="round"/></svg>
<span class="t pt" style="left:205.96px;top:8px;letter-spacing:0.138px">Direct Buffers</span>
<span class="t " style="left:40.66px;top:208px;letter-spacing:-0.070px">22:00</span>
<span class="t " style="left:117.66px;top:208px;letter-spacing:-0.070px">22:10</span>
<span class="t " style="left:194.66px;top:208px;letter-spacing:-0.070px">22:20</span>
<span class="t " style="left:271.66px;top:208px;letter-spacing:-0.070px">22:30</span>
<span class="t " style="left:348.66px;top:208px;letter-spacing:-0.070px">22:40</span>
<span class="t " style="left:426.66px;top:208px;letter-spacing:-0.070px">22:50</span>
<span class="t " style="left:10.59px;top:40px;letter-spacing:0.023px">40</span>
<span class="t " style="left:10.59px;top:78px;letter-spacing:0.023px">30</span>
<span class="t " style="left:10.59px;top:116px;letter-spacing:0.023px">20</span>
<span class="t " style="left:10.59px;top:154px;letter-spacing:0.023px">10</span>
<span class="t " style="left:17.30px;top:193px;letter-spacing:0.015px">0</span>
<i class="li" style="left:22.0px;top:239.0px;background:#7eb26d"></i>
<span class="t " style="left:38.70px;top:233px;letter-spacing:0.145px">count</span>
</div></div>
<div class="panel" style="left:1053px;top:954px;width:517px;height:258px"><div class="in">
<svg width="517" height="258" viewBox="0 0 517 258"><path d="M48.0 199.2 L491.5 199.2 L491.5 199.5 L48.0 199.5 Z" fill="#7eb26d" fill-opacity="0.1" stroke="none"/><path d="M48.0 199.2 L491.5 199.2 L491.5 199.5 L48.0 199.5 Z" fill="#eab839" fill-opacity="0.1" stroke="none"/><rect x="73" y="46" width="1" height="154" fill="rgba(200,200,200,0.21)"/><rect x="147" y="46" width="1" height="154" fill="rgba(200,200,200,0.21)"/><rect x="221" y="46" width="1" height="154" fill="rgba(200,200,200,0.21)"/><rect x="295" y="46" width="1" height="154" fill="rgba(200,200,200,0.21)"/><rect x="369" y="46" width="1" height="154" fill="rgba(200,200,200,0.21)"/><rect x="443" y="46" width="1" height="154" fill="rgba(200,200,200,0.21)"/><rect x="48" y="46" width="444" height="1" fill="rgba(200,200,200,0.21)"/><rect x="48" y="84" width="444" height="1" fill="rgba(200,200,200,0.21)"/><rect x="48" y="122" width="444" height="1" fill="rgba(200,200,200,0.21)"/><rect x="48" y="160" width="444" height="1" fill="rgba(200,200,200,0.21)"/><rect x="48" y="199" width="444" height="1" fill="rgba(200,200,200,0.21)"/><path d="M48.0 199.2 L491.5 199.2" fill="none" stroke="#7eb26d" stroke-width="1" stroke-linejoin="round"/><path d="M48.0 199.2 L491.5 199.2" fill="none" stroke="#eab839" stroke-width="1" stroke-opacity="0.78" stroke-linejoin="round"/></svg>
<span class="t pt" style="left:199.00px;top:8px;letter-spacing:0.129px">Mapped Buffers</span>
<span class="t " style="left:58.86px;top:208px;letter-spacing:-0.070px">22:00</span>
<span class="t " style="left:132.86px;top:208px;letter-spacing:-0.070px">22:10</span>
<span class="t " style="left:206.86px;top:208px;letter-spacing:-0.070px">22:20</span>
<span class="t " style="left:280.86px;top:208px;letter-spacing:-0.070px">22:30</span>
<span class="t " style="left:354.86px;top:208px;letter-spacing:-0.070px">22:40</span>
<span class="t " style="left:428.86px;top:208px;letter-spacing:-0.070px">22:50</span>
<span class="t " style="left:9.38px;top:40px;letter-spacing:-0.180px">1.00 B</span>
<span class="t " style="left:9.38px;top:78px;letter-spacing:-0.180px">0.75 B</span>
<span class="t " style="left:9.38px;top:116px;letter-spacing:-0.180px">0.50 B</span>
<span class="t " style="left:9.38px;top:154px;letter-spacing:-0.180px">0.25 B</span>
<span class="t " style="left:25.92px;top:193px;letter-spacing:-0.311px">0 B</span>
<i class="li" style="left:22.0px;top:239.0px;background:#7eb26d"></i>
<span class="t " style="left:38.70px;top:233px;letter-spacing:-0.065px">used</span>
<i class="li" style="left:77.8px;top:239.0px;background:#eab839"></i>
<span class="t " style="left:94.47px;top:233px;letter-spacing:0.068px">capacity</span>
</div></div>
<div class="panel" style="left:1578px;top:954px;width:517px;height:258px"><div class="in">
<svg width="517" height="258" viewBox="0 0 517 258"><path d="M25.0 199.2 L491.5 199.2 L491.5 199.5 L25.0 199.5 Z" fill="#7eb26d" fill-opacity="0.1" stroke="none"/><rect x="51" y="46" width="1" height="154" fill="rgba(200,200,200,0.21)"/><rect x="129" y="46" width="1" height="154" fill="rgba(200,200,200,0.21)"/><rect x="207" y="46" width="1" height="154" fill="rgba(200,200,200,0.21)"/><rect x="284" y="46" width="1" height="154" fill="rgba(200,200,200,0.21)"/><rect x="362" y="46" width="1" height="154" fill="rgba(200,200,200,0.21)"/><rect x="440" y="46" width="1" height="154" fill="rgba(200,200,200,0.21)"/><rect x="25" y="46" width="467" height="1" fill="rgba(200,200,200,0.21)"/><rect x="25" y="199" width="467" height="1" fill="rgba(200,200,200,0.21)"/><path d="M25.0 199.2 L491.5 199.2" fill="none" stroke="#7eb26d" stroke-width="1" stroke-linejoin="round"/></svg>
<span class="t pt" style="left:199.00px;top:8px;letter-spacing:0.129px">Mapped Buffers</span>
<span class="t " style="left:36.66px;top:208px;letter-spacing:-0.070px">22:00</span>
<span class="t " style="left:114.46px;top:208px;letter-spacing:-0.070px">22:10</span>
<span class="t " style="left:192.26px;top:208px;letter-spacing:-0.070px">22:20</span>
<span class="t " style="left:270.06px;top:208px;letter-spacing:-0.070px">22:30</span>
<span class="t " style="left:347.86px;top:208px;letter-spacing:-0.070px">22:40</span>
<span class="t " style="left:425.66px;top:208px;letter-spacing:-0.070px">22:50</span>
<span class="t " style="left:13.30px;top:40px;letter-spacing:0.015px">1</span>
<span class="t " style="left:13.30px;top:193px;letter-spacing:0.015px">0</span>
<i class="li" style="left:22.0px;top:239.0px;background:#7eb26d"></i>
<span class="t " style="left:38.70px;top:233px;letter-spacing:0.145px">count</span>
</div></div>
</body></html>
